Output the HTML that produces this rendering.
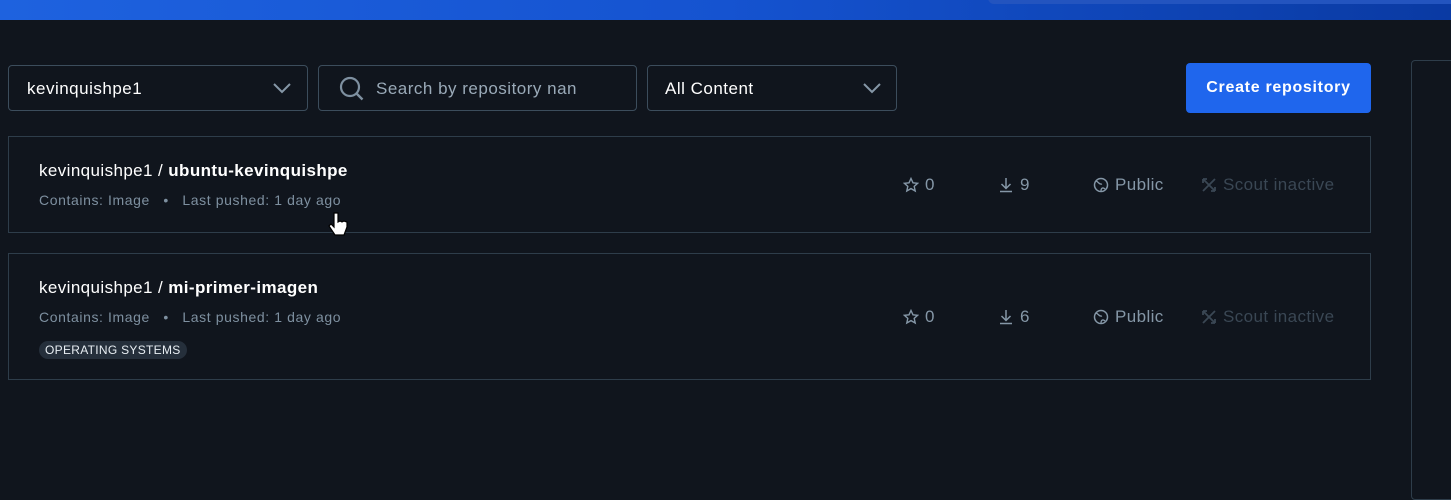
<!DOCTYPE html>
<html><head><style>
*{box-sizing:border-box;margin:0;padding:0}
body{width:1451px;height:487px;background:#10151d;font-family:"Liberation Sans",sans-serif;position:relative;overflow:hidden;color:#fff}
.top{position:absolute;left:0;top:0;width:1451px;height:20px;background:linear-gradient(90deg,#1e62df,#1553d0 50%,#0a3aa3)}
.topbox{position:absolute;left:988px;top:-10px;width:480px;height:14px;border-radius:6px;background:#2354bf}
.box{position:absolute;border:1px solid #3c4d5c;border-radius:4px;top:65px;height:46px}
.box span{position:absolute;top:13px;font-size:17px;letter-spacing:0.5px}
.btn{position:absolute;left:1186px;top:63px;width:185px;height:50px;background:#1f66ed;border-radius:4px;font-size:16px;font-weight:bold;text-align:center;line-height:50px;color:#fff;letter-spacing:0.7px}
.card{position:absolute;left:8px;width:1363px;border:1px solid #2e3d4a}
.title{position:absolute;left:30px;font-size:17px;letter-spacing:0.4px}
.sub{position:absolute;left:30px;font-size:14px;color:#7e90a0;letter-spacing:0.6px}
.st{position:absolute;font-size:17px;color:#8597a7;display:flex;align-items:center;gap:6px;letter-spacing:0.4px}
.sc{color:#3a4754}
.tag{position:absolute;left:30px;background:#252f3b;border-radius:9px;font-size:12px;padding:2px 6px;color:#e8eef3;letter-spacing:0.3px}
.rp{position:absolute;left:1411px;top:60px;width:60px;height:440px;border:1px solid #2e3d4a;border-radius:4px}
</style></head><body>
<div class="top"></div><div class="topbox"></div>
<div class="box" style="left:8px;width:300px"><span style="left:18px">kevinquishpe1</span>
<svg style="position:absolute;left:263px;top:15px" width="20" height="14"><path d="M2 3l8 8 8-8" stroke="#8597a7" stroke-width="2" fill="none"/></svg></div>
<div class="box" style="left:318px;width:319px"><svg style="position:absolute;left:20px;top:10px" width="26" height="26"><circle cx="11" cy="11" r="9" stroke="#7e90a0" stroke-width="2.2" fill="none"/><path d="M17.5 17.5l6 6" stroke="#7e90a0" stroke-width="2.4"/></svg><span style="left:57px;color:#9aaab8">Search by repository nan</span></div>
<div class="box" style="left:647px;width:250px"><span style="left:17px">All Content</span>
<svg style="position:absolute;left:214px;top:15px" width="20" height="14"><path d="M2 3l8 8 8-8" stroke="#8597a7" stroke-width="2" fill="none"/></svg></div>
<div class="btn">Create repository</div>
<div class="card" style="top:136px;height:97px">
<div class="title" style="top:24px">kevinquishpe1 / <b>ubuntu-kevinquishpe</b></div>
<div class="sub" style="top:55px">Contains: Image &nbsp;&nbsp;•&nbsp;&nbsp; Last pushed: 1 day ago</div>
</div>
<div class="card" style="top:253px;height:127px">
<div class="title" style="top:24px">kevinquishpe1 / <b>mi-primer-imagen</b></div>
<div class="sub" style="top:55px">Contains: Image &nbsp;&nbsp;•&nbsp;&nbsp; Last pushed: 1 day ago</div>
<div class="tag" style="top:87px">OPERATING SYSTEMS</div>
</div>
<div class="st" style="left:903px;top:175px"><svg width="16" height="16"><path d="M8 1.5l2 4.3 4.6.5-3.4 3.1 1 4.6L8 11.6 3.8 14l1-4.6L1.4 6.3 6 5.8z" stroke="#8597a7" stroke-width="1.4" fill="none"/></svg>0</div>
<div class="st" style="left:998px;top:175px"><svg width="16" height="16"><path d="M8 1v10M3.5 7l4.5 4.5L12.5 7M2 14.5h12" stroke="#8597a7" stroke-width="1.5" fill="none"/></svg>9</div>
<div class="st" style="left:1093px;top:175px"><svg width="16" height="16"><circle cx="8" cy="8" r="6.5" stroke="#8597a7" stroke-width="1.5" fill="none"/><path d="M3 4c3 1 3 4 6 3M8 14c0-3 2-4 4-2" stroke="#8597a7" stroke-width="1.3" fill="none"/></svg>Public</div>
<div class="st sc" style="left:1201px;top:175px"><svg width="16" height="16"><path d="M2 2l12 12M2 14l12-12M2 2h4M2 2v4M14 14h-4M14 14v-4" stroke="#3a4754" stroke-width="1.8" fill="none"/></svg>Scout inactive</div>
<div class="st" style="left:903px;top:307px"><svg width="16" height="16"><path d="M8 1.5l2 4.3 4.6.5-3.4 3.1 1 4.6L8 11.6 3.8 14l1-4.6L1.4 6.3 6 5.8z" stroke="#8597a7" stroke-width="1.4" fill="none"/></svg>0</div>
<div class="st" style="left:998px;top:307px"><svg width="16" height="16"><path d="M8 1v10M3.5 7l4.5 4.5L12.5 7M2 14.5h12" stroke="#8597a7" stroke-width="1.5" fill="none"/></svg>6</div>
<div class="st" style="left:1093px;top:307px"><svg width="16" height="16"><circle cx="8" cy="8" r="6.5" stroke="#8597a7" stroke-width="1.5" fill="none"/><path d="M3 4c3 1 3 4 6 3M8 14c0-3 2-4 4-2" stroke="#8597a7" stroke-width="1.3" fill="none"/></svg>Public</div>
<div class="st sc" style="left:1201px;top:307px"><svg width="16" height="16"><path d="M2 2l12 12M2 14l12-12M2 2h4M2 2v4M14 14h-4M14 14v-4" stroke="#3a4754" stroke-width="1.8" fill="none"/></svg>Scout inactive</div>
<div class="rp"></div>
<svg style="position:absolute;left:327px;top:210px" width="22" height="30"><path d="M7 3v14l-3-3-2 2 6 9h9l3-8v-5l-3-1-2 1-2-1-2 1V3z" fill="#fff" stroke="#000" stroke-width="1.2"/></svg>
</body></html>
